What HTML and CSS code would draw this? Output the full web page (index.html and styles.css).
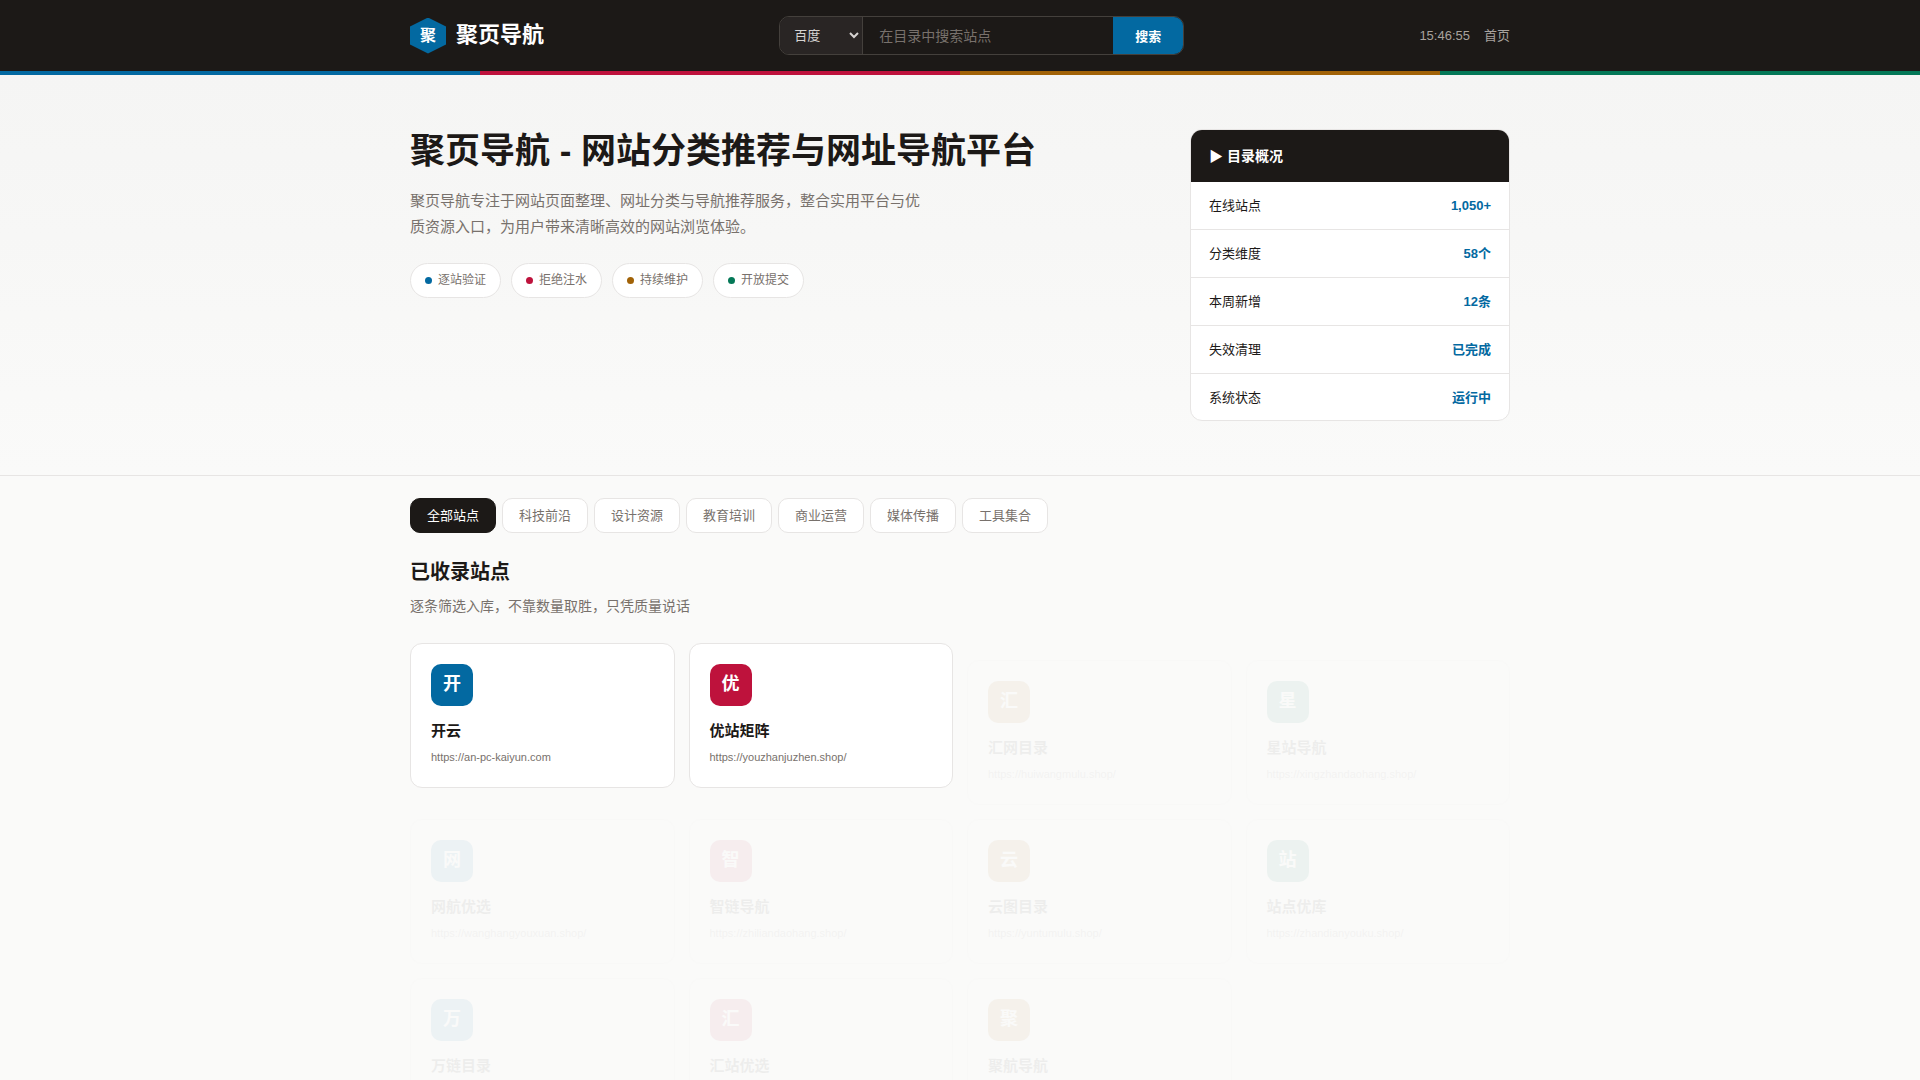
FILE: index.html
```html
<!DOCTYPE html>
<html lang="zh-CN">
<head>
<meta charset="utf-8">
<meta name="viewport" content="width=device-width, initial-scale=1">
<title>聚页导航 - 网站分类推荐与网址导航平台</title>
<link rel="stylesheet" href="styles.css">
</head>
<body>
<header class="site-header">
  <div class="container header-inner">
    <a class="logo" href="#"><span class="logo-mark">聚</span><span class="logo-name">聚页导航</span></a>
    <form class="search">
      <select class="search-engine" aria-label="搜索引擎"><option>百度</option></select>
      <input class="search-input" type="text" aria-label="搜索站点" placeholder="在目录中搜索站点">
      <button class="search-button" type="button">搜索</button>
    </form>
    <nav class="header-nav"><time>15:46:55</time><a href="#">首页</a></nav>
  </div>
  <div class="stripe"><span class="blue"></span><span class="red"></span><span class="amber"></span><span class="green"></span></div>
</header>

<section class="hero">
  <div class="container hero-inner">
    <div class="hero-text">
      <h1>聚页导航 - 网站分类推荐与网址导航平台</h1>
      <p>聚页导航专注于网站页面整理、网址分类与导航推荐服务，整合实用平台与优质资源入口，为用户带来清晰高效的网站浏览体验。</p>
      <ul class="chips">
        <li><span class="dot blue"></span>逐站验证</li>
        <li><span class="dot red"></span>拒绝注水</li>
        <li><span class="dot amber"></span>持续维护</li>
        <li><span class="dot green"></span>开放提交</li>
      </ul>
    </div>
    <aside class="overview">
      <h2>▶ 目录概况</h2>
      <dl>
        <div><dt>在线站点</dt><dd>1,050+</dd></div>
        <div><dt>分类维度</dt><dd>58个</dd></div>
        <div><dt>本周新增</dt><dd>12条</dd></div>
        <div><dt>失效清理</dt><dd>已完成</dd></div>
        <div><dt>系统状态</dt><dd>运行中</dd></div>
      </dl>
    </aside>
  </div>
</section>

<main class="container directory">
  <div class="tabs">
    <button class="tab active" type="button">全部站点</button>
    <button class="tab" type="button">科技前沿</button>
    <button class="tab" type="button">设计资源</button>
    <button class="tab" type="button">教育培训</button>
    <button class="tab" type="button">商业运营</button>
    <button class="tab" type="button">媒体传播</button>
    <button class="tab" type="button">工具集合</button>
  </div>
  <h2 class="section-title">已收录站点</h2>
  <p class="section-note">逐条筛选入库，不靠数量取胜，只凭质量说话</p>
  <div class="grid">
    <a class="card" href="#"><span class="card-icon blue">开</span><h3>开云</h3><p>https://an-pc-kaiyun.com</p></a>
    <a class="card" href="#"><span class="card-icon red">优</span><h3>优站矩阵</h3><p>https://youzhanjuzhen.shop/</p></a>
    <a class="card entering" href="#"><span class="card-icon amber">汇</span><h3>汇网目录</h3><p>https://huiwangmulu.shop/</p></a>
    <a class="card entering" href="#"><span class="card-icon green">星</span><h3>星站导航</h3><p>https://xingzhandaohang.shop/</p></a>
    <a class="card entering" href="#"><span class="card-icon blue">网</span><h3>网航优选</h3><p>https://wanghangyouxuan.shop/</p></a>
    <a class="card entering" href="#"><span class="card-icon red">智</span><h3>智链导航</h3><p>https://zhiliandaohang.shop/</p></a>
    <a class="card entering" href="#"><span class="card-icon amber">云</span><h3>云图目录</h3><p>https://yuntumulu.shop/</p></a>
    <a class="card entering" href="#"><span class="card-icon green">站</span><h3>站点优库</h3><p>https://zhandianyouku.shop/</p></a>
    <a class="card entering" href="#"><span class="card-icon blue">万</span><h3>万链目录</h3><p>https://wanlianmulu.shop/</p></a>
    <a class="card entering" href="#"><span class="card-icon red">汇</span><h3>汇站优选</h3><p>https://huizhanyouxuan.shop/</p></a>
    <a class="card entering" href="#"><span class="card-icon amber">聚</span><h3>聚航导航</h3><p>https://juhangdaohang.shop/</p></a>
  </div>
</main>
</body>
</html>
```
FILE: styles.css
```css
:root {
  --ink: #1c1917;
  --muted: #78716c;
  --line: #e7e5e4;
  --blue: #0369a1;
  --red: #be123c;
  --amber: #a16207;
  --green: #047857;
}

* { box-sizing: border-box; margin: 0; padding: 0; }

body {
  background: #fafaf9;
  color: var(--ink);
  font-family: "Liberation Sans", "Noto Sans CJK SC", sans-serif;
  font-size: 14px;
}

a { color: inherit; text-decoration: none; }
button, input, select { font-family: inherit; }
ul { list-style: none; }

.container { max-width: 1148px; margin: 0 auto; padding: 0 24px; }

.blue { background: var(--blue); }
.red { background: var(--red); }
.amber { background: var(--amber); }
.green { background: var(--green); }

/* Header */
.site-header { background: var(--ink); }
.header-inner {
  display: flex;
  align-items: center;
  justify-content: space-between;
  gap: 24px;
  padding-top: 16px;
  padding-bottom: 16px;
}
.logo {
  display: flex;
  gap: 10px;
  color: #fff;
  font-size: 22px;
  font-weight: 700;
  line-height: 34px;
}
.logo-mark {
  width: 36px;
  height: 36px;
  background: var(--blue);
  clip-path: polygon(50% 0, 100% 25%, 100% 75%, 50% 100%, 0 75%, 0 25%);
  font-size: 16px;
  line-height: 36px;
  text-align: center;
}
.search {
  display: flex;
  height: 39px;
  border: 1px solid #44403c;
  border-radius: 10px;
  overflow: hidden;
}
.search-engine {
  width: 83px;
  padding: 0 10px;
  border: 0;
  border-right: 1px solid #44403c;
  background: #292524;
  color: #d6d3d1;
  font-size: 13px;
}
.search-input {
  width: 250px;
  padding: 0 16px;
  border: 0;
  background: transparent;
  color: #fff;
  font-size: 14px;
}
.search-input::placeholder { color: var(--muted); }
.search-button {
  padding: 0 22px;
  border: 0;
  background: var(--blue);
  color: #fff;
  font-size: 13px;
  font-weight: 700;
}
.header-nav {
  display: flex;
  align-items: baseline;
  gap: 14px;
  color: #a8a29e;
  font-size: 13px;
  line-height: 20px;
}
.stripe { display: grid; grid-template-columns: repeat(4, 1fr); height: 4px; }

/* Hero */
.hero {
  padding: 54px 0;
  border-bottom: 1px solid var(--line);
  background: linear-gradient(#f5f5f4, #fafaf9);
}
.hero-inner { display: flex; align-items: flex-start; justify-content: space-between; gap: 40px; }
.hero h1 { font-size: 35px; line-height: 43px; }
.hero p { max-width: 520px; margin-top: 16px; color: var(--muted); font-size: 15px; line-height: 26px; }
.chips { display: flex; flex-wrap: wrap; gap: 10px; margin-top: 23px; }
.chips li {
  display: flex;
  align-items: center;
  gap: 6px;
  padding: 7px 14px;
  border: 1px solid var(--line);
  border-radius: 20px;
  background: #fff;
  color: var(--muted);
  font-size: 12px;
  line-height: 19px;
}
.dot { width: 7px; height: 7px; border-radius: 50%; }

.overview {
  width: 320px;
  flex: none;
  border: 1px solid var(--line);
  border-radius: 12px;
  background: #fff;
  overflow: hidden;
}
.overview h2 { padding: 15px 18px 14px; background: var(--ink); color: #fff; font-size: 14px; line-height: 23px; }
.overview dl div {
  display: flex;
  justify-content: space-between;
  padding: 13px 18px;
  border-bottom: 1px solid var(--line);
  font-size: 13px;
  line-height: 21px;
}
.overview dl div:last-child { padding-bottom: 12px; border-bottom: 0; }
.overview dd { color: var(--blue); font-weight: 700; }

/* Directory */
.directory { padding-top: 22px; padding-bottom: 48px; }
.tabs { display: flex; flex-wrap: wrap; gap: 6px; }
.tab {
  padding: 7px 16px;
  border: 1px solid var(--line);
  border-radius: 10px;
  background: #fff;
  color: var(--muted);
  font-size: 13px;
  line-height: 19px;
}
.tab.active { border-color: var(--ink); background: var(--ink); color: #fff; }
.section-title { margin-top: 23px; font-size: 20px; line-height: 32px; }
.section-note { margin-top: 7px; color: var(--muted); font-size: 14px; line-height: 22px; }
.grid { display: grid; grid-template-columns: repeat(4, 1fr); gap: 14px; margin-top: 26px; }
.card {
  display: block;
  padding: 20px;
  border: 1px solid var(--line);
  border-radius: 12px;
  background: #fff;
}
.card.entering { opacity: 0.05; transform: translateY(17px); }
.card-icon {
  display: block;
  width: 42px;
  height: 42px;
  border-radius: 10px;
  color: #fff;
  font-size: 18px;
  font-weight: 700;
  line-height: 40px;
  text-align: center;
}
.card h3 { margin-top: 13px; font-size: 15px; line-height: 24px; }
.card p { margin-top: 5px; color: var(--muted); font-size: 11px; line-height: 19px; }

@media (max-width: 900px) {
  .header-inner, .hero-inner { flex-wrap: wrap; }
  .grid { grid-template-columns: repeat(2, 1fr); }
}
```
